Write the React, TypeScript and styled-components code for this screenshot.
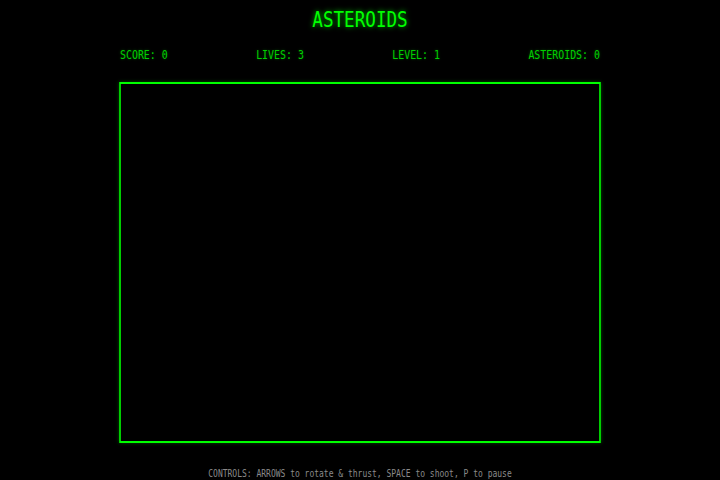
import React from "react";
import styled, { createGlobalStyle } from "styled-components";

const green = "#00ff00";
const dimGreen = "#00d000";

const GlobalStyle = createGlobalStyle`
  html, body {
    margin: 0;
    padding: 0;
    background: #000;
    overflow: hidden;
  }
`;

// the page is laid out at 900px and squeezed to the 720px window
const Screen = styled.div`
  width: 900px;
  height: 480px;
  transform: scaleX(0.8);
  transform-origin: 0 0;
  display: flex;
  flex-direction: column;
  align-items: center;
  font-family: "DejaVu Sans Mono", "Liberation Mono", monospace;
  background: #000;
`;

const Title = styled.h1`
  margin: 7px 0 0;
  font-size: 22px;
  line-height: 26px;
  font-weight: normal;
  color: ${green};
  text-shadow: 0 0 6px rgba(0, 255, 0, 0.7);
`;

const Stats = styled.div`
  margin-top: 15px;
  width: 600px;
  display: flex;
  justify-content: space-between;
  font-size: 12.4px;
  line-height: 14px;
  color: ${dimGreen};
  text-shadow: 0 0 3px rgba(0, 255, 0, 0.3);
`;

const Stat = styled.span``;

const Field = styled.div`
  margin-top: 20px;
  width: 602px;
  height: 362px;
  box-sizing: border-box;
  border: 2px solid ${green};
  box-shadow: 0 0 4px rgba(0, 255, 0, 0.3);
  background: #000;
`;

const Controls = styled.div`
  margin-top: 25px;
  font-size: 10px;
  line-height: 12px;
  color: #8a8a8a;
`;

export default function App() {
  const stats = [
    ["SCORE", 0],
    ["LIVES", 3],
    ["LEVEL", 1],
    ["ASTEROIDS", 0],
  ];
  return (
    <>
      <GlobalStyle />
      <Screen>
        <Title>ASTEROIDS</Title>
        <Stats>
          {stats.map(([label, value]) => (
            <Stat key={label}>
              {label}: {value}
            </Stat>
          ))}
        </Stats>
        <Field />
        <Controls>CONTROLS: ARROWS to rotate &amp; thrust, SPACE to shoot, P to pause</Controls>
      </Screen>
    </>
  );
}
